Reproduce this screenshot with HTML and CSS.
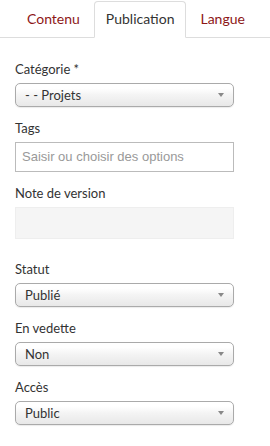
FILE: index.html
```html
<!DOCTYPE html>
<html lang="fr">
<head>
    <meta charset="UTF-8">
    <title>Publication</title>
    <link rel="stylesheet" href="styles.css">
</head>
<body>
    <ul class="tabs">
        <li class="tab">Contenu</li>
        <li class="tab active">Publication</li>
        <li class="tab">Langue</li>
    </ul>

    <div class="form">
        <div class="field">
            <label class="label">Catégorie *</label>
            <div class="select">- - Projets</div>
        </div>
        <div class="field">
            <label class="label">Tags</label>
            <div class="input placeholder">Saisir ou choisir des options</div>
        </div>
        <div class="field field-wide">
            <label class="label">Note de version</label>
            <div class="input disabled"></div>
        </div>
        <div class="field">
            <label class="label">Statut</label>
            <div class="select">Publié</div>
        </div>
        <div class="field">
            <label class="label">En vedette</label>
            <div class="select">Non</div>
        </div>
        <div class="field">
            <label class="label">Accès</label>
            <div class="select">Public</div>
        </div>
    </div>
</body>
</html>
```

FILE: styles.css
```css
body {
    margin: 0;
    font-family: Lato, "Open Sans", sans-serif;
    font-size: 13px;
    color: #333;
    background: #fff;
}

.tabs {
    display: flex;
    list-style: none;
    margin: 1px 0 0;
    padding: 0 0 0 15px;
    border-bottom: 1px solid #ddd;
    font-size: 14px;
}

.tab {
    padding: 7px 11px 8px;
    margin-right: 2px;
    margin-bottom: -1px;
    line-height: 20px;
    color: #8d1717;
    border: 1px solid transparent;
    border-radius: 4px 4px 0 0;
}

.tab.active {
    color: #333;
    background: #fff;
    border-color: #ddd #ddd transparent;
}

.form {
    padding: 21px 36px 0 15px;
}

.field {
    margin-bottom: 11px;
}

.field-wide {
    margin-bottom: 20px;
}

.label {
    display: block;
    line-height: 20px;
    margin-bottom: 4px;
}

.select {
    position: relative;
    height: 22px;
    line-height: 22px;
    padding: 0 9px;
    color: #333;
    border: 1px solid #aaa;
    border-radius: 5px;
    background: linear-gradient(#fff 20%, #f4f4f4 50%, #e8e8e8 100%);
    box-shadow: 0 1px 1px rgba(0, 0, 0, 0.08);
}

.select::after {
    content: "";
    position: absolute;
    right: 9px;
    top: 9px;
    border-left: 3px solid transparent;
    border-right: 3px solid transparent;
    border-top: 4px solid #888;
}

.input {
    height: 28px;
    line-height: 28px;
    padding: 0 6px;
    border: 1px solid #bbb;
}

.placeholder {
    font-family: "Liberation Sans", Arial, sans-serif;
    color: #999;
}

.disabled {
    height: 30px;
    background: #f5f5f5;
    border-color: #eee;
}
```
